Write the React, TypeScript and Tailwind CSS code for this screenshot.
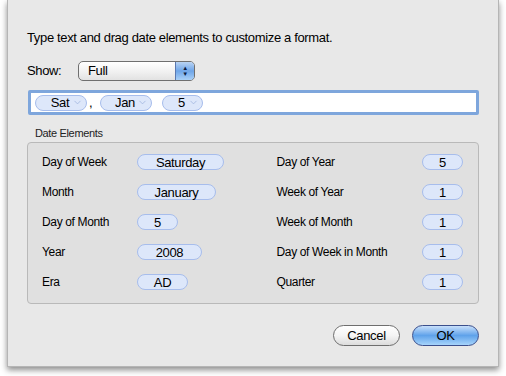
import { ChevronDown } from "lucide-react";

const font = { fontFamily: '"Lucida Grande", "Liberation Sans", Arial, sans-serif' };

function Pill({ text, w, drop }: { text: string; w: string; drop?: boolean }) {
  return (
    <span
      className={`inline-flex items-center justify-center h-[16px] rounded-full border border-[#a7bdec] bg-[#dde7fa] text-[13px] text-black leading-none ${w}`}
    >
      <span className={drop ? "ml-auto pl-3" : ""}>{text}</span>
      {drop && <ChevronDown size={11} strokeWidth={1.5} className="ml-auto mr-[3px] text-[#98aedb]" />}
    </span>
  );
}

const left = [
  ["Day of Week", "Saturday", "w-[87px]"],
  ["Month", "January", "w-[79px]"],
  ["Day of Month", "5", "w-[41px]"],
  ["Year", "2008", "w-[65px]"],
  ["Era", "AD", "w-[51px]"],
];
const right = [
  ["Day of Year", "5"],
  ["Week of Year", "1"],
  ["Week of Month", "1"],
  ["Day of Week in Month", "1"],
  ["Quarter", "1"],
];

export default function App() {
  return (
    <div className="w-[506px] h-[376px] bg-white" style={font}>
      <div className="ml-[7px] w-[492px] h-[367px] bg-[#e8e8e8] border-x border-b border-[#b5b5b5] shadow-[0_3px_6px_rgba(0,0,0,0.45)] flex flex-col pl-[19px] pr-[19px] pt-[30px] text-[13px] text-black tracking-[-0.35px]">
        <p className="leading-[16px]">Type text and drag date elements to customize a format.</p>

        <div className="flex items-center mt-[15px] h-[20px]">
          <span className="w-[51px]">Show:</span>
          <div className="flex w-[117px] h-[20px] rounded-[5px] border border-[#6f6f6f] overflow-hidden bg-gradient-to-b from-white via-[#f2f2f2] to-[#e2e2e2]">
            <span className="flex-1 pl-[9px] leading-[18px]">Full</span>
            <span className="w-[19px] flex flex-col items-center justify-center border-l border-[#5a78b0] bg-gradient-to-b from-[#b9d3f3] via-[#6ea5e8] to-[#a9d0f7] text-[#0a1c40] text-[6px] leading-[6px]">
              <span>▲</span>
              <span>▼</span>
            </span>
          </div>
        </div>

        <div className="mt-[9px] ml-[1px] w-[451px] h-[25px] rounded-[2px] border-[3px] border-[#7ea6dc] bg-white flex items-center pl-[4px]">
          <Pill text="Sat" w="w-[52px]" drop />
          <span className="ml-[2px] w-[11px]">,</span>
          <Pill text="Jan" w="w-[52px]" drop />
          <span className="w-[10px]" />
          <Pill text="5" w="w-[41px]" drop />
        </div>

        <p className="mt-[11px] ml-[8px] text-[11px] leading-[14px] text-[#222]">Date Elements</p>
        <div className="mt-[2px] w-[452px] h-[162px] rounded-[4px] border border-[#b9b9b9] bg-[#e0e0e0] grid grid-cols-2 pt-[4px] pl-[14px] pr-[15px]">
          <div className="flex flex-col">
            {left.map(([l, v, w]) => (
              <div key={l} className="flex items-center h-[30px]">
                <span className="w-[95px] text-[12px]">{l}</span>
                <Pill text={v} w={w} />
              </div>
            ))}
          </div>
          <div className="flex flex-col pl-[24px]">
            {right.map(([l, v]) => (
              <div key={l} className="flex items-center justify-between h-[30px]">
                <span className="text-[12px]">{l}</span>
                <Pill text={v} w="w-[41px]" />
              </div>
            ))}
          </div>
        </div>

        <div className="flex justify-end gap-[12px] mt-[21px]">
          <button className="w-[67px] h-[21px] rounded-full border border-[#6e6e6e] bg-gradient-to-b from-white via-[#f4f4f4] to-[#dcdcdc] text-[13px] leading-none">
            Cancel
          </button>
          <button className="w-[67px] h-[21px] rounded-full border border-[#3b4f8c] bg-gradient-to-b from-[#c8e0fa] via-[#5fa2ea] to-[#a6d4fb] text-[13px] leading-none">
            OK
          </button>
        </div>
      </div>
    </div>
  );
}
